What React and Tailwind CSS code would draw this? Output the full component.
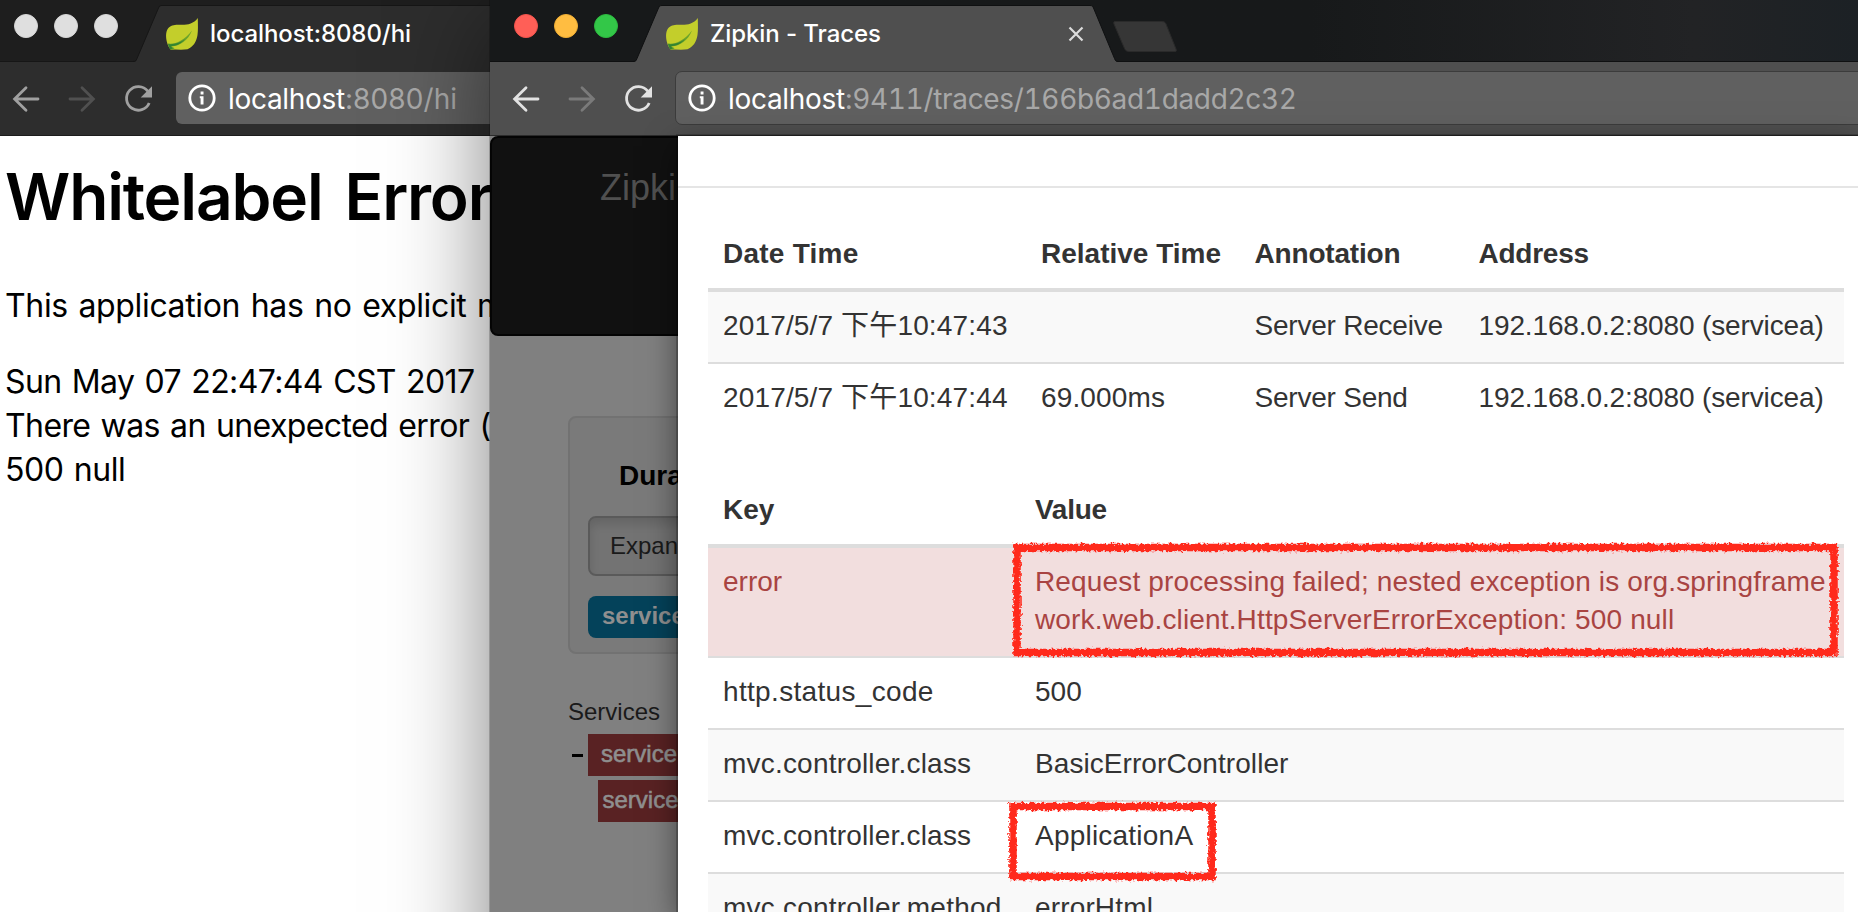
import React from "react";

function Leaf() {
  return (
    <svg className="h-8 w-8 shrink-0" viewBox="0 0 32 32">
      <path
        d="M31.800 0C31.900 6 32.200 12 31.500 17C30.500 24 27 29 21.500 31.300C17 32 10 31.500 4.500 31.500C3.500 30 2.500 28.500 1.500 26C-0.500 20 -0.500 14 2 10.500C5 6.500 10 6.500 15 6.800C21 7 27.500 6 31.800 0Z"
        fill="#c3ce2b"
      />
      <path d="M1.800 25.500C9 26.500 18 23 26 12.500C22 22.500 14 28 5.500 28.500C7.500 29.500 9 30 8 31.500H4.500C3 29.500 2.200 27.500 1.800 25.500Z" fill="#6ba32b" />
      <path d="M2.200 26C8 26.800 14 25 19 21C15 26 10 28 4.800 28.300L7 30.500L4.300 31.200C3.200 29.600 2.600 28 2.200 26Z" fill="#338432" />
    </svg>
  );
}

function BackArrow({ className }) {
  return (
    <svg className={`h-8 w-8 ${className}`} viewBox="0 0 32 32" fill="none" stroke="currentColor" strokeWidth="2.8" strokeLinecap="round">
      <path d="M28 16H5M16 4.800L4.600 16L16 27.200" />
    </svg>
  );
}

function ForwardArrow({ className }) {
  return (
    <svg className={`h-8 w-8 ${className}`} viewBox="0 0 32 32" fill="none" stroke="currentColor" strokeWidth="2.8" strokeLinecap="round">
      <path d="M4 16H27M16 4.800L27.400 16L16 27.200" />
    </svg>
  );
}

function Reload({ className }) {
  return (
    <svg className={`h-8 w-8 ${className}`} viewBox="0 0 32 32">
      <path d="M25.700 8.200A11.800 11.800 0 1 0 27.200 20" fill="none" stroke="currentColor" strokeWidth="2.8" />
      <path d="M30 3.200V14.500H18.700Z" fill="currentColor" />
    </svg>
  );
}

function Info() {
  return (
    <svg className="h-7 w-7 shrink-0 text-white" viewBox="0 0 28 28">
      <circle cx="14" cy="14" r="12.200" fill="none" stroke="currentColor" strokeWidth="2.8" />
      <path d="M12.600 7.500h2.900v3h-2.900zM11.800 12.200h3.700v8.300h-2.900v-6.200h-0.800z" fill="currentColor" />
    </svg>
  );
}

function Lights({ colors }) {
  return (
    <div className="flex gap-4 pt-[14px] pl-6">
      {colors.map((c, i) => (
        <div key={i} className={`h-6 w-6 rounded-full border ${c}`} />
      ))}
    </div>
  );
}

function Tab({ title, fill, line, closable, titleClass }) {
  return (
    <div className="relative mt-[5px] ml-[-3px] flex h-[57px] w-[486px] shrink-0 pt-[13px] pl-[33px]">
      <svg className="absolute inset-0 h-[57px] w-[486px]" viewBox="0 0 486 57">
        <path d="M0 57C2.500 57 3 56 4 53.500L25.500 3C26.500 1 27 0.500 29 0.500H457C459 0.500 459.700 1 460.500 3L481.500 53.500C482.500 56 483 57 486 57Z" fill={fill} />
        <path d="M0 56.500C2.500 56.500 3 56 4 53.500L25.500 3C26.500 1 27 0.500 29 0.500H457C459 0.500 459.700 1 460.500 3L481.500 53.500C482.500 56 483 56.500 486 56.500" fill="none" stroke={line} />
      </svg>
      <div className="relative flex w-full items-start">
        <Leaf />
        <span className={`ml-3 pt-px text-[24px] leading-[30px] font-medium whitespace-nowrap text-white ${titleClass}`}>{title}</span>
        {closable && (
          <svg className="mt-[8px] mr-[35px] ml-auto h-4 w-4 text-[#dcdcdc]" viewBox="0 0 16 16" stroke="currentColor" strokeWidth="2.200">
            <path d="M1.500 1.500L14.500 14.500M14.500 1.500L1.500 14.500" />
          </svg>
        )}
      </div>
    </div>
  );
}

const idleLight = "bg-[#dfdfdf] border-[#d6d6d6]";

function WhitelabelWindow() {
  return (
    <div className="absolute top-0 left-[-10px] flex h-[912px] w-[1200px] flex-col bg-white">
      <div className="flex h-[62px] shrink-0 border-b border-[#161616] bg-[#1e1e1e]">
        <Lights colors={[idleLight, idleLight, idleLight]} />
        <div className="w-[18px]" />
        <Tab title="localhost:8080/hi" fill="#2d2d2d" line="#161616" titleClass="tracking-[-0.070px]" />
      </div>
      <div className="flex h-[74px] shrink-0 items-center border-b border-[#1c1c1c] bg-[#2d2d2d] pl-5">
        <BackArrow className="text-[#a0a0a0]" />
        <ForwardArrow className="ml-6 text-[#505050]" />
        <Reload className="ml-6 text-[#a0a0a0]" />
        <div className="mt-[-1px] ml-[22px] flex h-[52px] flex-1 items-center rounded-[6px] bg-[#606060] pl-[12px] text-[28px] leading-[34px]">
          <Info />
          <span className="ml-3 pt-0.5 tracking-[-0.300px] text-white">localhost</span>
          <span className="pt-0.5 tracking-[0.100px] text-[#a8a8a8]">:8080/hi</span>
        </div>
      </div>
      <div className="pt-[22px] pl-[15px] whitespace-nowrap text-black">
        <h1 className="text-[64px] leading-[78px] font-semibold tracking-[-1.150px] [word-spacing:7px]">Whitelabel Error</h1>
        <p className="mt-[48px] text-[32px] leading-[44px] tracking-[-0.350px] [word-spacing:2px]">
          This application has no explicit m
        </p>
        <div className="mt-[32px] text-[32px] leading-[44px] tracking-[-0.600px] [word-spacing:1.800px]">
          <p>Sun May 07 22:47:44 CST 2017</p>
          <p>There was an unexpected error (</p>
          <p className="tracking-[-0.450px]">500 null</p>
        </div>
      </div>
    </div>
  );
}

function TracePage() {
  return (
    <div className="h-[776px] w-[1368px] bg-[#808080] whitespace-nowrap">
      <div className="h-[200px] rounded-[8px] border-2 border-[#040404] bg-[#111] pt-[30px] pl-[108px] text-[36px] leading-[40px] text-[#505050]">
        Zipki
      </div>
      <div className="mt-20 ml-[78px] h-[238px] w-[1200px] rounded-[8px] border-2 border-[#727272] bg-[#7a7a7a] pl-[18px]">
        <div className="pt-[39px] pl-[31px] text-[28px] leading-[38px] font-bold text-black">Dura</div>
        <div className="mt-[21px] h-[60px] w-[180px] rounded-[8px] border-2 border-[#5a5a5a] bg-[#737373] pt-[9px] pl-[20px] text-[24px] leading-[38px] text-[#1a1a1a] shadow-[inset_0_6px_10px_rgba(0,0,0,0.125)]">
          Expan
        </div>
        <div className="mt-5 flex h-[42px] w-[140px] items-center rounded-[8px] bg-[#04425a] pb-[2px] pl-[14px] text-[24px] font-bold text-[#8f8f8f]">
          service
        </div>
      </div>
      <div className="mt-[41px] ml-[78px] text-[24px] leading-[34px] text-[#1a1a1a]">Services</div>
      <div className="mt-[5px] flex h-[42px] items-center">
        <div className="ml-[82px] h-[3px] w-[11px] bg-black" />
        <div className="ml-[5px] flex h-[42px] w-[300px] items-center bg-[#592223] pb-[2px] pl-[13px] text-[24px] text-[#8f8f8f] [-webkit-text-stroke:0.600px_#8f8f8f]">
          service
        </div>
      </div>
      <div className="mt-1 ml-[108px] flex h-[42px] w-[300px] items-center bg-[#592223] pb-[2px] pl-[4.500px] text-[24px] text-[#8f8f8f] [-webkit-text-stroke:0.600px_#8f8f8f]">
        service
      </div>
    </div>
  );
}

const annotationCols = "grid grid-cols-[318px_213.500px_224px_1fr] pl-[15px]";
const tagCols = "grid grid-cols-[312px_1fr] pl-[15px]";

function SpanDetails() {
  return (
    <div className="absolute top-0 left-[188px] h-[776px] w-[1180px] bg-white text-[28px] leading-[38px] whitespace-nowrap text-[#333] shadow-[0_0_0_2px_rgba(0,0,0,0.2),0_10px_30px_rgba(0,0,0,0.5)]">
      <div className="h-[52px] border-b-2 border-[#e5e5e5]" />
      <div className="h-[724px] pt-[30px] pr-[14px] pl-[30px]">
        <div className={`${annotationCols} h-[74px] border-b-4 border-[#ddd] pt-[17px] font-bold`}>
          <span className="tracking-[0.250px]">Date Time</span>
          <span>Relative Time</span>
          <span className="tracking-[-0.180px]">Annotation</span>
          <span className="tracking-[-0.240px]">Address</span>
        </div>
        <div className={`${annotationCols} h-[70px] bg-[#f9f9f9] pt-[15px]`}>
          <span className="tracking-[0.150px]">2017/5/7 下午10:47:43</span>
          <span />
          <span className="tracking-[-0.220px]">Server Receive</span>
          <span className="tracking-[-0.130px]">192.168.0.2:8080 (servicea)</span>
        </div>
        <div className={`${annotationCols} h-[72px] border-t-2 border-[#ddd] pt-[15px]`}>
          <span className="tracking-[0.150px]">2017/5/7 下午10:47:44</span>
          <span className="tracking-[0.150px]">69.000ms</span>
          <span className="tracking-[-0.220px]">Server Send</span>
          <span className="tracking-[-0.130px]">192.168.0.2:8080 (servicea)</span>
        </div>

        <div className={`${tagCols} mt-10 h-[74px] border-b-4 border-[#ddd] pt-[17px] font-bold`}>
          <span>Key</span>
          <span className="tracking-[-0.270px]">Value</span>
        </div>
        <div className={`${tagCols} h-[108px] bg-[#f2dede] pt-[15px] text-[#a94442]`}>
          <span>error</span>
          <span className="tracking-[0.150px]">
            Request processing failed; nested exception is org.springframe
            <br />
            work.web.client.HttpServerErrorException: 500 null
          </span>
        </div>
        <div className={`${tagCols} h-[72px] border-t-2 border-[#ddd] pt-[15px]`}>
          <span className="tracking-[0.330px]">http.status_code</span>
          <span>500</span>
        </div>
        <div className={`${tagCols} h-[72px] border-t-2 border-[#ddd] bg-[#f9f9f9] pt-[15px]`}>
          <span className="tracking-[0.200px]">mvc.controller.class</span>
          <span className="tracking-[0.070px]">BasicErrorController</span>
        </div>
        <div className={`${tagCols} h-[72px] border-t-2 border-[#ddd] pt-[15px]`}>
          <span className="tracking-[0.200px]">mvc.controller.class</span>
          <span className="tracking-[0.220px]">ApplicationA</span>
        </div>
        <div className={`${tagCols} h-[40px] border-t-2 border-[#ddd] bg-[#f9f9f9] pt-[15px]`}>
          <span className="tracking-[0.220px]">mvc.controller.method</span>
          <span className="tracking-[0.150px]">errorHtml</span>
        </div>
      </div>
      {/* hand-drawn crayon frames around the highlighted values */}
      <svg className="absolute top-0 left-0 h-[776px] w-[1180px]" viewBox="0 0 1180 776">
        <defs>
          <filter id="crayon" x="0" y="0" width="1180" height="776" filterUnits="userSpaceOnUse">
            <feTurbulence type="fractalNoise" baseFrequency="0.35" numOctaves="2" seed="4" result="n" />
            <feDisplacementMap in="SourceGraphic" in2="n" scale="6" xChannelSelector="R" yChannelSelector="G" />
          </filter>
        </defs>
        <g filter="url(#crayon)" fill="none" stroke="#ff2a1a" strokeWidth="7.500">
          <rect x="339" y="411.500" width="817" height="105" />
          <rect x="335" y="670.500" width="199" height="70" />
        </g>
      </svg>
    </div>
  );
}

function ZipkinWindow() {
  return (
    <div className="absolute top-0 left-[490px] h-[1100px] w-[1500px] bg-[#808080] shadow-[0_0_0_1px_rgba(0,0,0,0.2),0_24px_90px_rgba(0,0,0,0.5)]">
      <div className="flex h-[62px] w-[1368px] border-b border-[#0f1011] bg-linear-to-r from-[#17191a] from-60% via-[#222325] via-88% to-[#1c2125]">
        <Lights colors={["bg-[#ff5f57] border-[#f2534c]", "bg-[#ffbd41] border-[#f0ae33]", "bg-[#33c748] border-[#2cba3f]"]} />
        <div className="w-[18px]" />
        <Tab title="Zipkin - Traces" fill="#4f4f4f" line="#0f1011" closable titleClass="tracking-[-0.080px]" />
        <svg className="mt-[21px] ml-[-7px] h-[32px] w-[66px]" viewBox="0 0 66 32">
          <path d="M3 0.500H50C52 0.500 53 1 54 3L64 28C64.700 30 64.500 30.500 63 30.500H17C14.500 30.500 13.500 29.500 12.500 27.500L2 3C1.500 1.500 1.500 0.500 3 0.500Z" fill="#363636" stroke="#2a2a2a" />
        </svg>
      </div>
      <div className="flex h-[74px] w-[1368px] items-center overflow-hidden border-b border-[#2b2b2b] bg-[#4f4f4f] pl-5">
        <BackArrow className="shrink-0 text-[#e2e2e2]" />
        <ForwardArrow className="ml-6 shrink-0 text-[#7a7a7a]" />
        <Reload className="ml-6 shrink-0 text-[#e2e2e2]" />
        <div className="mt-[-1px] ml-[21px] flex h-[54px] w-[1300px] shrink-0 items-center rounded-[7px] border border-[#3c3c3c] bg-[#606060] pl-[12px] text-[28px] leading-[34px]">
          <Info />
          <span className="ml-3 pt-0.5 tracking-[-0.300px] text-white">localhost</span>
          <span className="pt-0.5 tracking-[-0.330px] text-[#a8a8a8] tabular-nums">:9411/traces/166b6ad1dadd2c32</span>
        </div>
      </div>
      <div className="relative font-['Liberation_Sans','Noto_Sans_CJK_SC',sans-serif]">
        <TracePage />
        <SpanDetails />
      </div>
    </div>
  );
}

export default function App() {
  return (
    <div className="relative h-[912px] w-[1858px] overflow-hidden bg-white font-['Inter',sans-serif]">
      <WhitelabelWindow />
      <ZipkinWindow />
    </div>
  );
}
